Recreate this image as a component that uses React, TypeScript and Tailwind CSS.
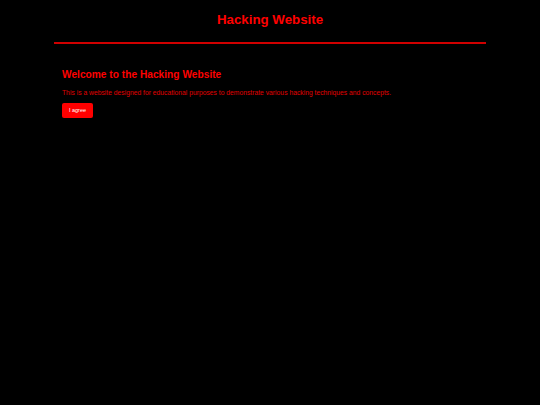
export default function App() {
  return (
    <div className="min-h-[405px] w-full bg-black font-['Liberation_Sans',Arial,sans-serif]">
      <header className="mx-auto w-[432px] border-b-2 border-[#d00000] pt-[12px] pb-[14px]">
        <h1 className="text-center text-[13.3px] font-bold leading-[16px] text-[#ff0000]">Hacking Website</h1>
      </header>
      <main className="mx-auto w-[432px] px-2 pt-[25px]">
        <h2 className="text-[10.2px] font-bold leading-[12px] text-[#ff0000]">Welcome to the Hacking Website</h2>
        <p className="mt-[8px] text-[6.75px] leading-[8px] text-[#e00000]">
          This is a website designed for educational purposes to demonstrate various hacking techniques and concepts.
        </p>
        <button className="mt-[6px] block h-[15px] w-[31px] rounded-[2px] bg-[#ff0000] text-[5.5px] text-white">I agree</button>
      </main>
    </div>
  )
}
